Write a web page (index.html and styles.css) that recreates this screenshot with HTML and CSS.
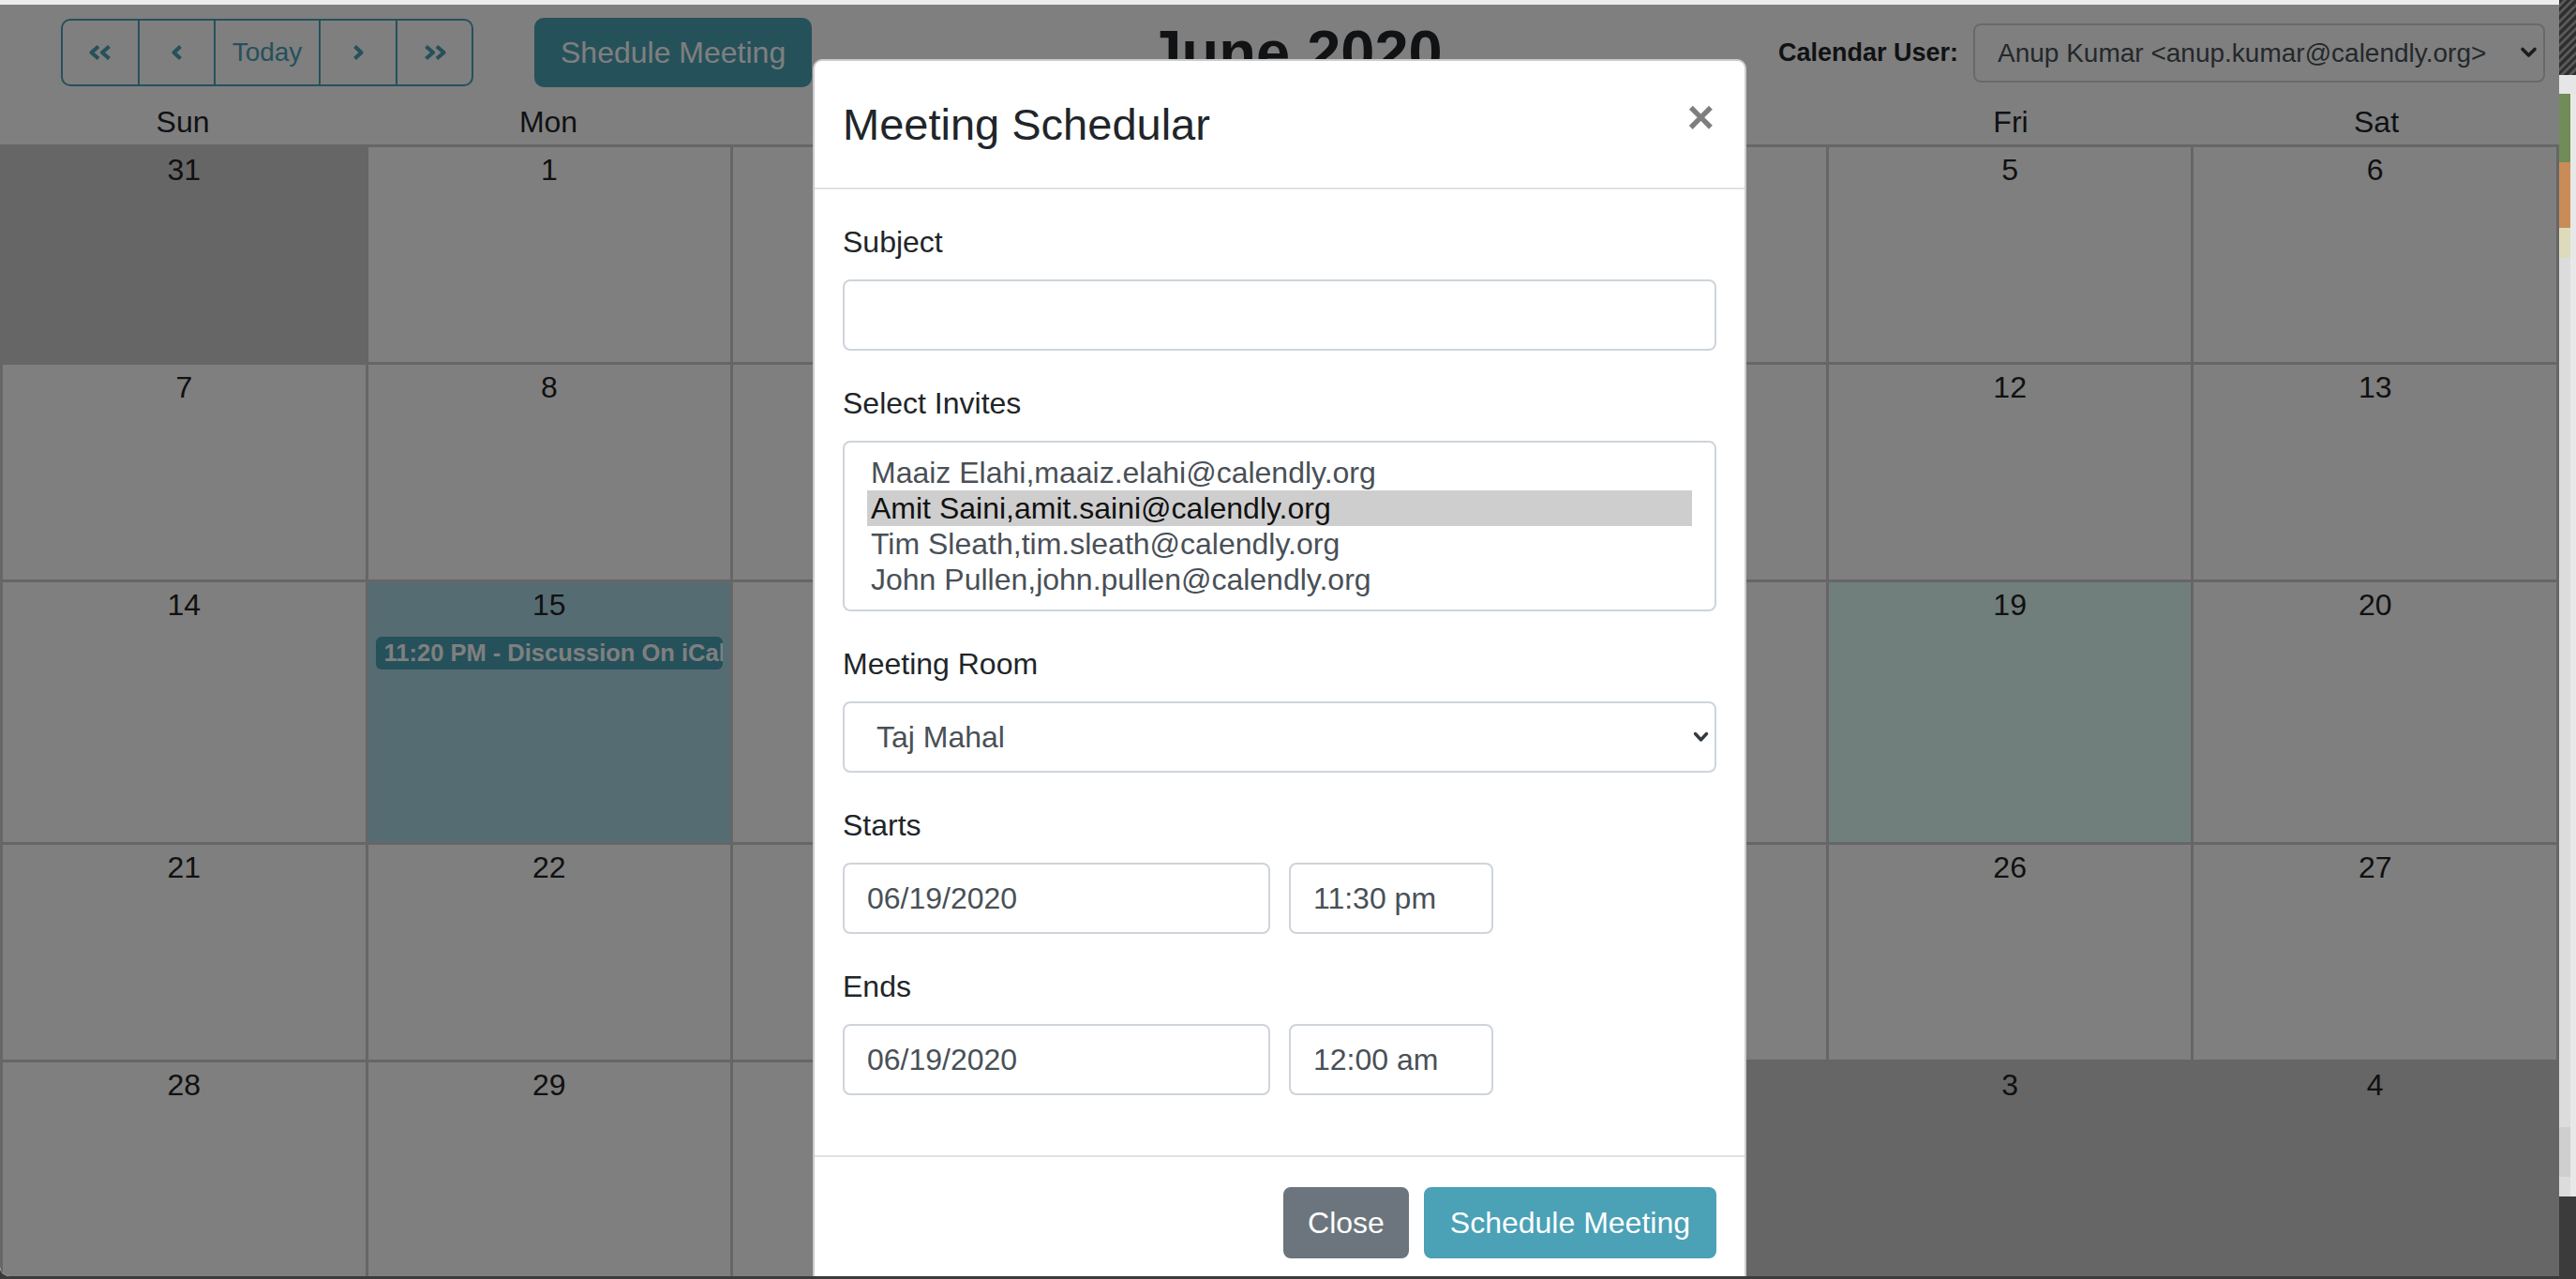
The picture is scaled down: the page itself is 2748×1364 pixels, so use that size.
FILE: index.html
```html
<!DOCTYPE html>
<html lang="en">
<head>
<meta charset="utf-8">
<title>Calendar - Meeting Schedular</title>
<link rel="stylesheet" href="styles.css">
</head>
<body>
<div class="screen">
  <div class="window">
    <div class="chrome-strip"></div>
    <div class="viewport">
      <div class="app">
        <header class="toolbar">
          <div class="toolbar-left">
            <div class="nav-group">
              <button class="nav-btn nav-w1" aria-label="Previous year">
                <svg width="28" height="18" viewBox="0 0 28 18"><path d="M12 2.5 L4.5 9 L12 15.5 M23.5 2.5 L16 9 L23.5 15.5" fill="none" stroke="currentColor" stroke-width="4.2" stroke-linejoin="round"/></svg>
              </button>
              <button class="nav-btn nav-w2" aria-label="Previous month">
                <svg width="14" height="18" viewBox="0 0 14 18"><path d="M10.5 2.5 L3.5 9 L10.5 15.5" fill="none" stroke="currentColor" stroke-width="4.2" stroke-linejoin="round"/></svg>
              </button>
              <button class="nav-btn nav-today">Today</button>
              <button class="nav-btn nav-w4" aria-label="Next month">
                <svg width="14" height="18" viewBox="0 0 14 18"><path d="M3.5 2.5 L10.5 9 L3.5 15.5" fill="none" stroke="currentColor" stroke-width="4.2" stroke-linejoin="round"/></svg>
              </button>
              <button class="nav-btn nav-w5" aria-label="Next year">
                <svg width="28" height="18" viewBox="0 0 28 18"><path d="M4.5 2.5 L12 9 L4.5 15.5 M16 2.5 L23.5 9 L16 15.5" fill="none" stroke="currentColor" stroke-width="4.2" stroke-linejoin="round"/></svg>
              </button>
            </div>
            <button class="btn-top">Shedule Meeting</button>
          </div>
          <h2 class="month-title">June 2020</h2>
          <div class="user-picker">
            <label class="user-label" for="calUser">Calendar User:</label>
            <div class="select-wrap">
              <select id="calUser" class="select-sm">
                <option>Anup Kumar &lt;anup.kumar@calendly.org&gt;</option>
              </select>
              <svg class="chevron chevron-sm" width="19" height="13" viewBox="0 0 19 13"><path d="M3 3 L9.5 9.5 L16 3" fill="none" stroke="#343a40" stroke-width="3.6" stroke-linejoin="round" stroke-linecap="round"/></svg>
            </div>
          </div>
        </header>

        <div class="weekdays">
          <div>Sun</div><div>Mon</div><div>Tue</div><div>Wed</div><div>Thu</div><div>Fri</div><div>Sat</div>
        </div>

        <div class="month">
          <div class="day muted"><div class="num">31</div><div class="events"></div></div>
          <div class="day"><div class="num">1</div><div class="events"></div></div>
          <div class="day"><div class="num">2</div><div class="events"></div></div>
          <div class="day"><div class="num">3</div><div class="events"></div></div>
          <div class="day"><div class="num">4</div><div class="events"></div></div>
          <div class="day"><div class="num">5</div><div class="events"></div></div>
          <div class="day"><div class="num">6</div><div class="events"></div></div>

          <div class="day"><div class="num">7</div><div class="events"></div></div>
          <div class="day"><div class="num">8</div><div class="events"></div></div>
          <div class="day"><div class="num">9</div><div class="events"></div></div>
          <div class="day"><div class="num">10</div><div class="events"></div></div>
          <div class="day"><div class="num">11</div><div class="events"></div></div>
          <div class="day"><div class="num">12</div><div class="events"></div></div>
          <div class="day"><div class="num">13</div><div class="events"></div></div>

          <div class="day"><div class="num">14</div><div class="events"></div></div>
          <div class="day selected"><div class="num">15</div><div class="events"><div class="event">11:20 PM - Discussion On iCalendar</div></div></div>
          <div class="day"><div class="num">16</div><div class="events"></div></div>
          <div class="day"><div class="num">17</div><div class="events"></div></div>
          <div class="day"><div class="num">18</div><div class="events"></div></div>
          <div class="day today"><div class="num">19</div><div class="events"></div></div>
          <div class="day"><div class="num">20</div><div class="events"></div></div>

          <div class="day"><div class="num">21</div><div class="events"></div></div>
          <div class="day"><div class="num">22</div><div class="events"></div></div>
          <div class="day"><div class="num">23</div><div class="events"></div></div>
          <div class="day"><div class="num">24</div><div class="events"></div></div>
          <div class="day"><div class="num">25</div><div class="events"></div></div>
          <div class="day"><div class="num">26</div><div class="events"></div></div>
          <div class="day"><div class="num">27</div><div class="events"></div></div>

          <div class="day"><div class="num">28</div><div class="events"></div></div>
          <div class="day"><div class="num">29</div><div class="events"></div></div>
          <div class="day"><div class="num">30</div><div class="events"></div></div>
          <div class="day muted"><div class="num">1</div><div class="events"></div></div>
          <div class="day muted"><div class="num">2</div><div class="events"></div></div>
          <div class="day muted"><div class="num">3</div><div class="events"></div></div>
          <div class="day muted"><div class="num">4</div><div class="events"></div></div>
        </div>
      </div>

      <div class="backdrop"></div>

      <div class="modal" role="dialog" aria-labelledby="modalTitle">
        <div class="modal-content">
          <div class="modal-header">
            <h5 class="modal-title" id="modalTitle">Meeting Schedular</h5>
            <button class="close" aria-label="Close">&times;</button>
          </div>
          <div class="modal-body">
            <div class="form-group">
              <label class="form-label" for="subject">Subject</label>
              <input class="form-control" id="subject" type="text">
            </div>
            <div class="form-group">
              <label class="form-label">Select Invites</label>
              <div class="listbox" role="listbox" aria-multiselectable="true">
                <div class="option" role="option">Maaiz Elahi,maaiz.elahi@calendly.org</div>
                <div class="option is-selected" role="option" aria-selected="true">Amit Saini,amit.saini@calendly.org</div>
                <div class="option" role="option">Tim Sleath,tim.sleath@calendly.org</div>
                <div class="option" role="option">John Pullen,john.pullen@calendly.org</div>
              </div>
            </div>
            <div class="form-group">
              <label class="form-label" for="room">Meeting Room</label>
              <div class="select-wrap">
                <select id="room" class="form-control form-select">
                  <option>Taj Mahal</option>
                </select>
                <svg class="chevron chevron-lg" width="17" height="13" viewBox="0 0 17 13"><path d="M2.5 3 L8.5 9.5 L14.5 3" fill="none" stroke="#343a40" stroke-width="3.4" stroke-linejoin="round" stroke-linecap="round"/></svg>
              </div>
            </div>
            <div class="form-group">
              <label class="form-label">Starts</label>
              <div class="form-row">
                <div class="col-6"><input class="form-control" type="text" value="06/19/2020"></div>
                <div class="col-3"><input class="form-control" type="text" value="11:30 pm"></div>
              </div>
            </div>
            <div class="form-group">
              <label class="form-label">Ends</label>
              <div class="form-row">
                <div class="col-6"><input class="form-control" type="text" value="06/19/2020"></div>
                <div class="col-3"><input class="form-control" type="text" value="12:00 am"></div>
              </div>
            </div>
          </div>
          <div class="modal-footer">
            <button class="btn btn-secondary">Close</button>
            <button class="btn btn-info">Schedule Meeting</button>
          </div>
        </div>
      </div>
    </div>
  </div>

  <div class="side-strip" aria-hidden="true">
    <div class="side-top"></div>
    <div class="side-body">
      <div class="side-marks">
        <div class="mark mark-green"></div>
        <div class="mark mark-orange"></div>
        <div class="mark mark-beige"></div>
        <div class="mark-fill"></div>
        <div class="mark mark-gray"></div>
        <div class="mark-tail"></div>
      </div>
      <div class="side-edge"></div>
    </div>
  </div>
</div>
</body>
</html>
```

FILE: styles.css
```css
* { box-sizing: border-box; }

html, body {
  margin: 0;
  padding: 0;
}

body {
  background: #3b3b3b;
  font-family: "Liberation Sans", Arial, sans-serif;
  color: #212529;
}

button, input, select {
  font-family: inherit;
}

.screen {
  display: flex;
  width: 2748px;
  height: 1364px;
  overflow: hidden;
}

.window {
  flex: none;
  width: 2730px;
  height: 1361px;
  display: flex;
  flex-direction: column;
  background: #fff;
  border-bottom-left-radius: 10px;
  overflow: hidden;
}

.chrome-strip {
  flex: none;
  height: 5px;
  background: #ececec;
}

.viewport {
  position: relative;
  flex: 1;
  overflow: hidden;
}

.app {
  background: #fff;
}

/* ---------- toolbar ---------- */
.toolbar {
  display: flex;
  align-items: center;
  justify-content: space-between;
  height: 74px;
  margin-top: 14px;
  padding: 0 15px 0 65px;
}

.toolbar-left {
  display: flex;
  align-items: center;
  gap: 65px;
}

.nav-group {
  display: flex;
  height: 72px;
  border: 2px solid #4ba2b6;
  border-radius: 10px;
  overflow: hidden;
}

.nav-btn {
  display: flex;
  align-items: center;
  justify-content: center;
  height: 100%;
  padding: 0;
  border: none;
  border-left: 2px solid #4ba2b6;
  background: transparent;
  color: #4ba2b6;
  font-size: 28px;
}

.nav-w1 { width: 80px; border-left: none; }
.nav-w2 { width: 81px; }
.nav-today { width: 112px; }
.nav-w4 { width: 82px; }
.nav-w5 { width: 81px; }

.btn-top {
  height: 74px;
  padding: 0 26px;
  border: 2px solid #4ba2b6;
  border-radius: 10px;
  background: #4ba2b6;
  color: #fff;
  font-size: 32px;
}

.month-title {
  margin: 0;
  font-size: 65px;
  line-height: 76px;
  font-weight: 700;
  color: #212529;
}

.user-picker {
  display: flex;
  align-items: center;
  gap: 16px;
}

.user-label {
  font-size: 27px;
  font-weight: 700;
  color: #212529;
}

.select-wrap {
  position: relative;
}

.select-sm {
  display: block;
  width: 610px;
  height: 63px;
  padding: 0 44px 0 24px;
  border: 2px solid #ced4da;
  border-radius: 8px;
  background: #fff;
  color: #495057;
  font-size: 28px;
  appearance: none;
  -webkit-appearance: none;
}

.chevron {
  position: absolute;
  top: 50%;
  transform: translateY(-50%);
  pointer-events: none;
}

.chevron-sm { right: 8px; }
.chevron-lg { right: 8px; }

/* ---------- calendar ---------- */
.weekdays {
  display: grid;
  grid-template-columns: repeat(7, 1fr);
  margin-top: 13px;
  text-align: center;
  font-size: 32px;
  line-height: 48px;
  color: #212529;
}

.month {
  display: grid;
  grid-template-columns: repeat(7, 1fr);
  border-top: 3px solid #cccccc;
  border-left: 3px solid #cccccc;
}

.day {
  min-width: 0;
  border-right: 3px solid #cccccc;
  border-bottom: 3px solid #cccccc;
  text-align: center;
  color: #222;
}

.day.muted { background: #cccccc; }
.day.selected { background: #add8e6; }
.day.today { background: #e1fcf8; }

.num {
  font-size: 32px;
  line-height: 48px;
}

.events {
  padding-bottom: 181px;
}

.event {
  height: 35px;
  margin: 10px 8px 3px;
  padding: 0 9px;
  border-radius: 6px;
  background: #4ba2b6;
  color: #fff;
  font-size: 25.5px;
  font-weight: 700;
  line-height: 35px;
  text-align: left;
  white-space: nowrap;
  overflow: hidden;
}

/* ---------- modal ---------- */
.backdrop {
  position: absolute;
  inset: 0;
  background: rgba(0, 0, 0, 0.5);
}

.modal {
  position: absolute;
  top: 58px;
  left: 0;
  right: 0;
  width: 996px;
  margin: 0 auto;
}

.modal-content {
  background: #fff;
  border: 2px solid rgba(0, 0, 0, 0.2);
  border-radius: 10px;
}

.modal-header {
  display: flex;
  align-items: flex-start;
  justify-content: space-between;
  padding: 32px 30px 31px 30px;
  border-bottom: 2px solid #dee2e6;
}

.modal-title {
  margin: 0;
  font-size: 47px;
  line-height: 72px;
  font-weight: 500;
  color: #212529;
}

.close {
  margin-top: 4px;
  padding: 0 2px;
  height: 48px;
  border: none;
  background: transparent;
  color: #000;
  opacity: 0.5;
  font-size: 50px;
  line-height: 48px;
  font-weight: 700;
  text-shadow: 0 2px 0 #fff;
}

.modal-body {
  padding: 32px 30px;
}

.form-group {
  margin-bottom: 32px;
}

.form-label {
  display: block;
  margin-bottom: 16px;
  font-size: 32px;
  line-height: 48px;
  color: #212529;
}

.form-control {
  display: block;
  width: 100%;
  height: 76px;
  padding: 12px 24px;
  border: 2px solid #ced4da;
  border-radius: 8px;
  background: #fff;
  color: #495057;
  font-size: 32px;
  line-height: 48px;
}

.form-select {
  padding-left: 34px;
  appearance: none;
  -webkit-appearance: none;
}

.listbox {
  padding: 13px 24px;
  border: 2px solid #ced4da;
  border-radius: 8px;
  background: #fff;
}

.option {
  height: 38px;
  padding: 0 4px;
  font-size: 32px;
  line-height: 38px;
  color: #495057;
  white-space: nowrap;
}

.option.is-selected {
  background: #cecece;
  color: #111;
}

.form-row {
  display: flex;
  margin: 0 -10px;
}

.col-6 {
  flex: 0 0 50%;
  padding: 0 10px;
}

.col-3 {
  flex: 0 0 25%;
  padding: 0 10px;
}

.modal-footer {
  display: flex;
  align-items: center;
  justify-content: flex-end;
  padding: 24px 22px;
  border-top: 2px solid #dee2e6;
}

.btn {
  margin: 8px;
  padding: 12px 24px;
  border: 2px solid transparent;
  border-radius: 8px;
  color: #fff;
  font-size: 32px;
  line-height: 48px;
}

.btn-secondary { background: #6c757d; border-color: #6c757d; }
.btn-info { background: #4ba1b6; border-color: #4ba1b6; padding: 12px 26px; }

/* ---------- right edge strip ---------- */
.side-strip {
  flex: none;
  width: 18px;
  height: 1276px;
  display: flex;
  flex-direction: column;
}

.side-top {
  height: 80px;
  background: repeating-linear-gradient(135deg, #2f2f2f 0 3px, #585858 3px 6px);
}

.side-body {
  flex: 1;
  display: flex;
  background: #e6e6e6;
  padding-top: 20px;
}

.side-marks {
  width: 12px;
  display: flex;
  flex-direction: column;
}

.mark-green { height: 73px; background: #6f8c59; }
.mark-orange { height: 70px; background: #c98c57; }
.mark-beige { height: 32px; background: #dedbbd; }
.mark-fill { height: 927px; background: #dcdcdc; }
.mark-gray { height: 53px; background: #cfcfcf; }
.mark-tail { flex: 1; background: #dcdcdc; }

.side-edge {
  flex: 1;
  background: #e8e8e8;
}
```
